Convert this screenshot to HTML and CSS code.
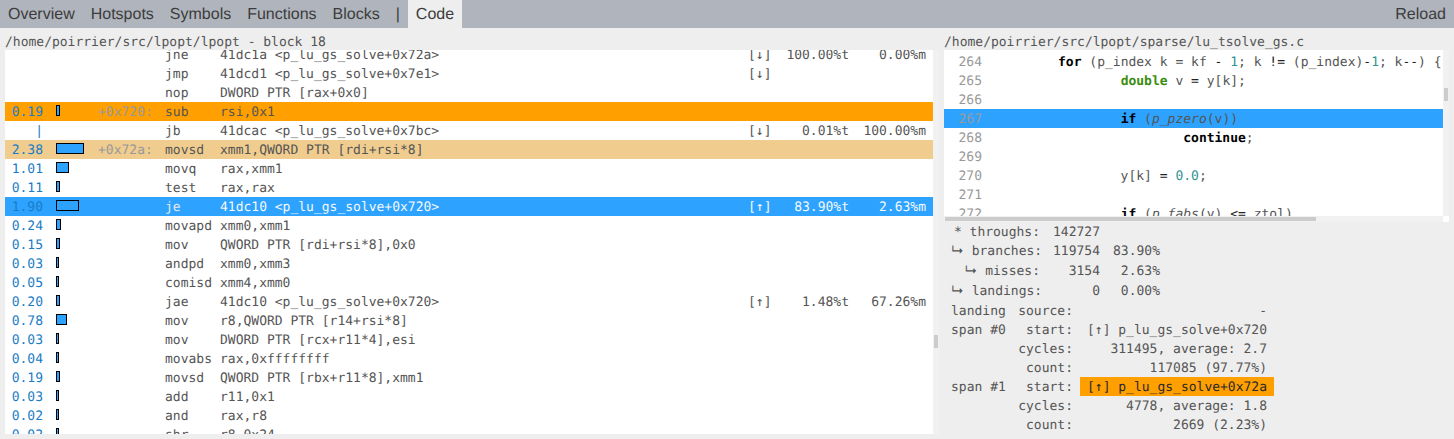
FILE: index.html
```html
<!DOCTYPE html>
<html lang="en">
<head>
<meta charset="utf-8">
<title>Code</title>
<link rel="stylesheet" href="styles.css">
</head>
<body>
<nav class="nav">
  <a class="nav-item">Overview</a>
  <a class="nav-item">Hotspots</a>
  <a class="nav-item">Symbols</a>
  <a class="nav-item">Functions</a>
  <a class="nav-item">Blocks</a>
  <span class="nav-item">|</span>
  <a class="nav-item active">Code</a>
  <a class="nav-item reload">Reload</a>
</nav>
<main class="main">
  <section class="left">
    <div class="title">/home/poirrier/src/lpopt/lpopt - block 18</div>
    <div class="asm">
      <div class="asm-list">
        <div class="row"><span class="pct"></span><span class="bars"></span><span class="off"></span><span class="mn">jne</span><span class="ops">41dc1a &lt;p_lu_gs_solve+0x72a&gt;</span><span class="dir">[↓]</span><span class="tk">100.00%t</span><span class="ms">0.00%m</span></div>
        <div class="row"><span class="pct"></span><span class="bars"></span><span class="off"></span><span class="mn">jmp</span><span class="ops">41dcd1 &lt;p_lu_gs_solve+0x7e1&gt;</span><span class="dir">[↓]</span><span class="tk"></span><span class="ms"></span></div>
        <div class="row"><span class="pct"></span><span class="bars"></span><span class="off"></span><span class="mn">nop</span><span class="ops">DWORD PTR [rax+0x0]</span><span class="dir"></span><span class="tk"></span><span class="ms"></span></div>
        <div class="row orange"><span class="pct">0.19</span><span class="bars"><i class="bar" style="width:4px"></i></span><span class="off">+0x720:</span><span class="mn">sub</span><span class="ops">rsi,0x1</span><span class="dir"></span><span class="tk"></span><span class="ms"></span></div>
        <div class="row"><span class="pct">|</span><span class="bars"></span><span class="off"></span><span class="mn">jb</span><span class="ops">41dcac &lt;p_lu_gs_solve+0x7bc&gt;</span><span class="dir">[↓]</span><span class="tk">0.01%t</span><span class="ms">100.00%m</span></div>
        <div class="row tan"><span class="pct">2.38</span><span class="bars"><i class="bar" style="width:28px"></i></span><span class="off">+0x72a:</span><span class="mn">movsd</span><span class="ops">xmm1,QWORD PTR [rdi+rsi*8]</span><span class="dir"></span><span class="tk"></span><span class="ms"></span></div>
        <div class="row"><span class="pct">1.01</span><span class="bars"><i class="bar" style="width:13px"></i></span><span class="off"></span><span class="mn">movq</span><span class="ops">rax,xmm1</span><span class="dir"></span><span class="tk"></span><span class="ms"></span></div>
        <div class="row"><span class="pct">0.11</span><span class="bars"><i class="bar" style="width:4px"></i></span><span class="off"></span><span class="mn">test</span><span class="ops">rax,rax</span><span class="dir"></span><span class="tk"></span><span class="ms"></span></div>
        <div class="row blue"><span class="pct">1.90</span><span class="bars"><i class="bar" style="width:23px"></i></span><span class="off"></span><span class="mn">je</span><span class="ops">41dc10 &lt;p_lu_gs_solve+0x720&gt;</span><span class="dir">[↑]</span><span class="tk">83.90%t</span><span class="ms">2.63%m</span></div>
        <div class="row"><span class="pct">0.24</span><span class="bars"><i class="bar" style="width:5px"></i></span><span class="off"></span><span class="mn">movapd</span><span class="ops">xmm0,xmm1</span><span class="dir"></span><span class="tk"></span><span class="ms"></span></div>
        <div class="row"><span class="pct">0.15</span><span class="bars"><i class="bar" style="width:4px"></i></span><span class="off"></span><span class="mn">mov</span><span class="ops">QWORD PTR [rdi+rsi*8],0x0</span><span class="dir"></span><span class="tk"></span><span class="ms"></span></div>
        <div class="row"><span class="pct">0.03</span><span class="bars"><i class="bar" style="width:3px"></i></span><span class="off"></span><span class="mn">andpd</span><span class="ops">xmm0,xmm3</span><span class="dir"></span><span class="tk"></span><span class="ms"></span></div>
        <div class="row"><span class="pct">0.05</span><span class="bars"><i class="bar" style="width:3px"></i></span><span class="off"></span><span class="mn">comisd</span><span class="ops">xmm4,xmm0</span><span class="dir"></span><span class="tk"></span><span class="ms"></span></div>
        <div class="row"><span class="pct">0.20</span><span class="bars"><i class="bar" style="width:4px"></i></span><span class="off"></span><span class="mn">jae</span><span class="ops">41dc10 &lt;p_lu_gs_solve+0x720&gt;</span><span class="dir">[↑]</span><span class="tk">1.48%t</span><span class="ms">67.26%m</span></div>
        <div class="row"><span class="pct">0.78</span><span class="bars"><i class="bar" style="width:11px"></i></span><span class="off"></span><span class="mn">mov</span><span class="ops">r8,QWORD PTR [r14+rsi*8]</span><span class="dir"></span><span class="tk"></span><span class="ms"></span></div>
        <div class="row"><span class="pct">0.03</span><span class="bars"><i class="bar" style="width:3px"></i></span><span class="off"></span><span class="mn">mov</span><span class="ops">DWORD PTR [rcx+r11*4],esi</span><span class="dir"></span><span class="tk"></span><span class="ms"></span></div>
        <div class="row"><span class="pct">0.04</span><span class="bars"><i class="bar" style="width:3px"></i></span><span class="off"></span><span class="mn">movabs</span><span class="ops">rax,0xffffffff</span><span class="dir"></span><span class="tk"></span><span class="ms"></span></div>
        <div class="row"><span class="pct">0.19</span><span class="bars"><i class="bar" style="width:4px"></i></span><span class="off"></span><span class="mn">movsd</span><span class="ops">QWORD PTR [rbx+r11*8],xmm1</span><span class="dir"></span><span class="tk"></span><span class="ms"></span></div>
        <div class="row"><span class="pct">0.03</span><span class="bars"><i class="bar" style="width:3px"></i></span><span class="off"></span><span class="mn">add</span><span class="ops">r11,0x1</span><span class="dir"></span><span class="tk"></span><span class="ms"></span></div>
        <div class="row"><span class="pct">0.02</span><span class="bars"><i class="bar" style="width:3px"></i></span><span class="off"></span><span class="mn">and</span><span class="ops">rax,r8</span><span class="dir"></span><span class="tk"></span><span class="ms"></span></div>
        <div class="row"><span class="pct">0.02</span><span class="bars"><i class="bar" style="width:3px"></i></span><span class="off"></span><span class="mn">shr</span><span class="ops">r8,0x24</span><span class="dir"></span><span class="tk"></span><span class="ms"></span></div>
      </div>
    </div>
  </section>
  <div class="gutter"><span class="track"><span class="handle"></span></span></div>
  <section class="right">
    <div class="title">/home/poirrier/src/lpopt/sparse/lu_tsolve_gs.c</div>
    <div class="code">
      <div class="line"><span class="ln">264</span><span class="src">        <b>for</b> (p_index k = kf <u>-</u> <em>1</em>; k <u>!=</u> (p_index)<u>-</u><em>1</em>; k<u>--</u>) {</span></div>
      <div class="line"><span class="ln">265</span><span class="src">                <strong>double</strong> v <u>=</u> y[k];</span></div>
      <div class="line"><span class="ln">266</span><span class="src"></span></div>
      <div class="line hl"><span class="ln">267</span><span class="src">                <b>if</b> (<i>p_pzero</i>(v))</span></div>
      <div class="line"><span class="ln">268</span><span class="src">                        <b>continue</b>;</span></div>
      <div class="line"><span class="ln">269</span><span class="src"></span></div>
      <div class="line"><span class="ln">270</span><span class="src">                y[k] <u>=</u> <em>0.0</em>;</span></div>
      <div class="line"><span class="ln">271</span><span class="src"></span></div>
      <div class="line"><span class="ln">272</span><span class="src">                <b>if</b> (<i>p_fabs</i>(v) <u>&lt;=</u> ztol)</span></div>
      <span class="vtrack"><span class="vthumb"></span></span>
      <span class="htrack"><span class="hthumb"></span></span>
      <span class="corner"></span>
    </div>
    <div class="stats">
      <div class="s1 first"><span class="k">* throughs:</span><span class="v">142727</span><span class="p"></span></div>
      <div class="s1"><span class="k"><span class="arrow">↳</span> branches:</span><span class="v">119754</span><span class="p">83.90%</span></div>
      <div class="s1"><span class="k"><span class="arrow">↳</span> misses:</span><span class="v">3154</span><span class="p">2.63%</span></div>
      <div class="s1"><span class="k"><span class="arrow">↳</span> landings:</span><span class="v">0</span><span class="p">0.00%</span></div>
      <div class="s2"><span class="g">landing</span><span class="l">source:</span><span class="d">-</span></div>
      <div class="s2"><span class="g">span #0</span><span class="l">start:</span><span class="d">[↑] p_lu_gs_solve+0x720</span></div>
      <div class="s2"><span class="g"></span><span class="l">cycles:</span><span class="d">311495, average: 2.7</span></div>
      <div class="s2"><span class="g"></span><span class="l">count:</span><span class="d">117085 (97.77%)</span></div>
      <div class="s2"><span class="g">span #1</span><span class="l">start:</span><span class="d mark">[↑] p_lu_gs_solve+0x72a</span></div>
      <div class="s2"><span class="g"></span><span class="l">cycles:</span><span class="d">4778, average: 1.8</span></div>
      <div class="s2"><span class="g"></span><span class="l">count:</span><span class="d">2669 (2.23%)</span></div>
    </div>
  </section>
</main>
</body>
</html>
```
FILE: styles.css
```css
* { box-sizing: border-box; }
html, body { margin: 0; height: 100%; }
body {
  background: #eeeeee;
  color: #555555;
  font: 13px/21px "DejaVu Sans Mono", monospace;
  text-rendering: geometricPrecision;
  display: flex;
  flex-direction: column;
  overflow: hidden;
}
.nav {
  display: flex;
  height: 28px;
  flex: none;
  background: #b0b5bd;
  font: 16px/29px "Liberation Sans", Arial, sans-serif;
  color: #3c3c3c;
}
.nav-item { padding: 0 8px; }
.nav-item.active { background: #eeeeee; }
.nav-item.reload { margin-left: auto; padding-right: 8px; }

.main {
  flex: 1;
  min-height: 0;
  display: flex;
  padding: 0 5px 5px;
}
.left { width: 928px; flex: none; display: flex; flex-direction: column; }
.right { flex: 1; min-width: 0; display: flex; flex-direction: column; }
.gutter { width: 11px; flex: none; padding-top: 22px; display: flex; }
.track { width: 6px; background: #f1f1f1; position: relative; }
.handle {
  position: absolute;
  left: 1px;
  top: 285px;
  width: 4px;
  height: 13px;
  background: #cccccc;
}
.title { height: 22px; padding-top: 4px; white-space: pre; }

.asm { flex: 1; min-height: 0; background: #fff; overflow: hidden; }
.asm-list { margin-top: -5px; }
.row { display: flex; height: 19px; white-space: pre; }
.pct { width: 38px; text-align: right; color: #1a7cc6; flex: none; }
.bars { width: 13px; margin-left: 13px; flex: none; display: block; }
.bar { display: block; height: 11px; margin-top: 3px; background: #2da3ff; border: 1px solid #000; }
.off { width: 54px; margin-left: 29px; color: #999999; flex: none; }
.mn { width: 55px; margin-left: 13px; flex: none; }
.ops { width: 528px; flex: none; }
.dir { width: 24px; flex: none; }
.tk { width: 77px; text-align: right; flex: none; }
.ms { width: 77px; text-align: right; flex: none; }
.orange { background: #ff9f00; }
.tan { background: #f0cd8f; }
.blue { background: #2da3ff; }
.blue .ops, .blue .dir, .blue .tk, .blue .ms { color: #f4f8fb; }
.blue .mn { color: #e4e8ee; }

.code { position: relative; height: 172px; flex: none; padding-top: 2px; background: #fff; overflow: hidden; }
.line { display: flex; height: 19px; width: 499px; white-space: pre; }
.ln { width: 38px; text-align: right; color: #999999; flex: none; }
.src { margin-left: 13.4px; color: #555555; }
.src b { color: #000; font-weight: 700; }
.src strong { color: #3a8c0e; font-weight: 700; }
.src em { color: #2f9391; font-style: normal; }
.src i { font-style: italic; }
.src u { color: #222222; text-decoration: none; }
.hl { background: #2da3ff; }
.vtrack {
  position: absolute;
  right: 0;
  top: 0;
  bottom: 6px;
  width: 6px;
  background: #f1f1f1;
}
.vthumb {
  position: absolute;
  left: 1px;
  top: 38px;
  width: 4px;
  height: 13px;
  background: #cccccc;
}
.htrack {
  position: absolute;
  left: 0;
  right: 6px;
  bottom: 0;
  height: 6px;
  background: #f1f1f1;
}
.hthumb {
  position: absolute;
  left: 1px;
  top: 1px;
  width: 371px;
  height: 4px;
  background: #cccccc;
}
.corner {
  position: absolute;
  right: 0;
  bottom: 0;
  width: 6px;
  height: 6px;
  background: #fff;
}

.stats { flex: 1; min-height: 0; }
.s1 { display: flex; height: 20px; padding-left: 7px; white-space: pre; }
.s1.first { height: 19px; }
.arrow { font-family: "Open Sans", Inter, sans-serif; line-height: 1; }
.k { width: 89px; text-align: right; flex: none; }
.v { width: 60px; text-align: right; flex: none; }
.p { width: 60px; text-align: right; flex: none; }
.s2 { display: flex; height: 19px; padding-left: 7px; white-space: pre; }
.g { width: 61px; flex: none; }
.l { width: 61px; text-align: right; flex: none; }
.d { width: 194px; margin-left: 7px; text-align: right; padding-right: 7px; flex: none; }
.mark { background: #ff9f00; color: #2a2a2a; }
```
